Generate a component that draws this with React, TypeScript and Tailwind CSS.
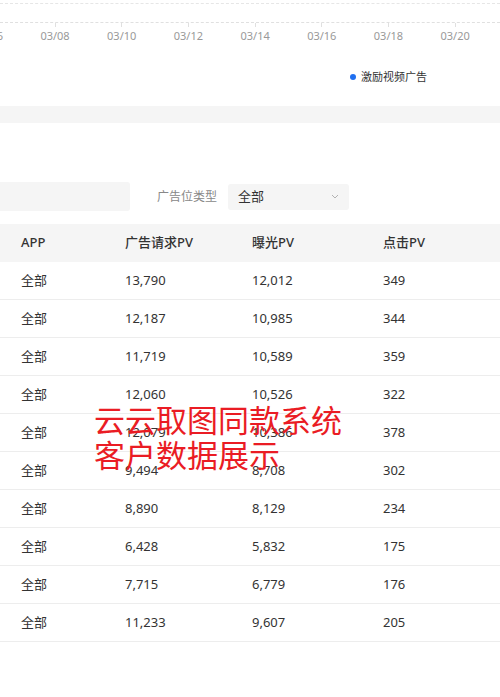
const DATES = ["03/06", "03/08", "03/10", "03/12", "03/14", "03/16", "03/18", "03/20"];

const ROWS = [
  ["全部", "13,790", "12,012", "349"],
  ["全部", "12,187", "10,985", "344"],
  ["全部", "11,719", "10,589", "359"],
  ["全部", "12,060", "10,526", "322"],
  ["全部", "12,079", "10,386", "378"],
  ["全部", "9,494", "8,708", "302"],
  ["全部", "8,890", "8,129", "234"],
  ["全部", "6,428", "5,832", "175"],
  ["全部", "7,715", "6,779", "176"],
  ["全部", "11,233", "9,607", "205"],
];

const font = { fontFamily: '"Noto Sans", "Noto Sans CJK SC", sans-serif' };

export default function App() {
  return (
    <div className="relative w-[500px] h-[697px] overflow-hidden bg-white" style={font}>
      {/* 图表底部 */}
      <div className="h-[106px] relative">
        <div className="pt-[3px] border-b border-dashed border-[#e6e6e6]" />
        <div className="mt-[18px] border-b border-dashed border-[#e0e0e0]" />
        <div className="flex -ml-[45px]">
          {DATES.map((d) => (
            <div key={d} className="w-[66.7px] shrink-0 flex flex-col items-center">
              <div className="w-px h-[4px] bg-[#e0e0e0]" />
              <div className="mt-[2px] text-[11px] leading-[14px] text-[#999]">{d}</div>
            </div>
          ))}
        </div>
        <div className="flex items-center justify-end pr-[73px] mt-[27px] gap-[5px]">
          <span className="w-[6px] h-[6px] rounded-full bg-[#1f6ff0]" />
          <span className="text-[11px] leading-[14px] text-[#333]">激励视频广告</span>
        </div>
      </div>

      <div className="h-[17px] bg-[#f5f5f5]" />

      {/* 筛选 */}
      <div className="h-[59px]" />
      <div className="flex items-center h-[29px]">
        <div className="w-[130px] h-[29px] rounded-r-[3px] bg-[#f5f5f5]" />
        <span className="ml-[27px] text-[12px] text-[#888]">广告位类型</span>
        <div className="ml-[11px] w-[121px] h-[26px] rounded-[3px] bg-[#f5f5f5] flex items-center justify-between pl-[10px] pr-[10px]">
          <span className="text-[13px] text-[#333]">全部</span>
          <svg width="8" height="5" viewBox="0 0 8 5" className="text-[#aaa]">
            <path d="M1 1l3 3 3-3" fill="none" stroke="currentColor" strokeWidth="0.9" />
          </svg>
        </div>
      </div>

      {/* 表格 */}
      <div className="mt-[13px]">
        <div className="grid grid-cols-[104px_127px_131px_1fr] pl-[21px] h-[38px] items-center bg-[#f5f5f5] text-[13px] font-medium text-[#333]">
          <span>APP</span>
          <span>广告请求PV</span>
          <span>曝光PV</span>
          <span>点击PV</span>
        </div>
        {ROWS.map((r, i) => (
          <div
            key={i}
            className="grid grid-cols-[104px_127px_131px_1fr] pl-[21px] h-[38px] items-center border-b border-[#ededed] text-[13px] text-[#333]"
          >
            {r.map((c, j) => (
              <span key={j}>{c}</span>
            ))}
          </div>
        ))}
      </div>

      {/* 水印 */}
      <div className="absolute left-[94px] top-[403px] text-[31px] leading-[35px] text-[#ea1c24]">
        <div>云云取图同款系统</div>
        <div>客户数据展示</div>
      </div>
    </div>
  );
}
